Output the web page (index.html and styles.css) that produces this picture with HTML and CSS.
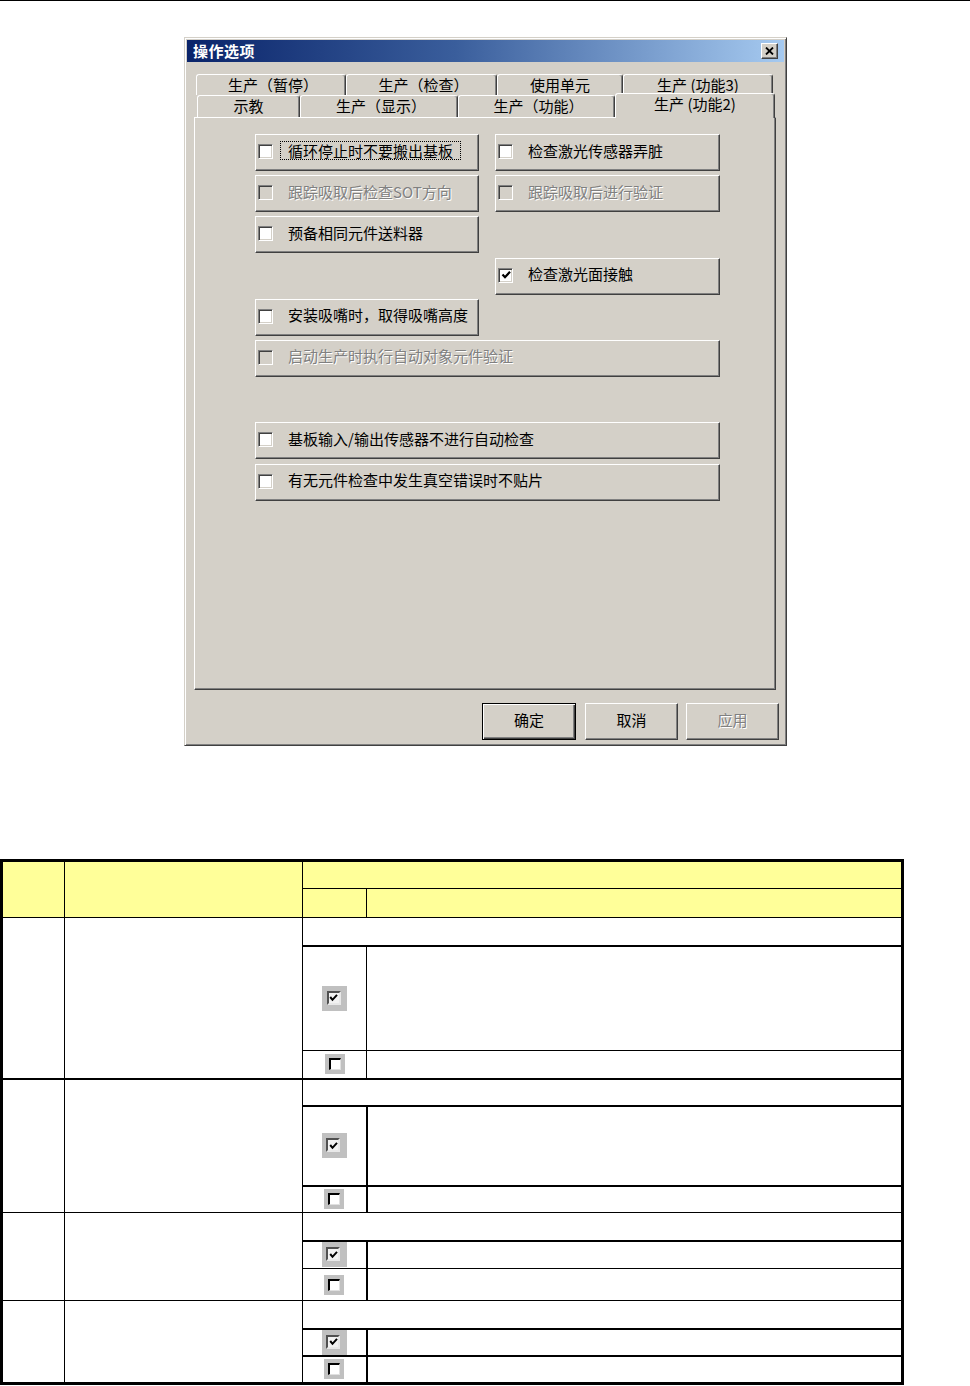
FILE: index.html
```html
<!DOCTYPE html>
<html lang="zh-CN">
<head>
<meta charset="utf-8">
<title>操作选项</title>
<link rel="stylesheet" href="styles.css">
</head>
<body>
<div class="top-rule"></div>

<div class="dialog">
  <div class="titlebar">
    <span class="title">操作选项</span>
    <span class="close"><svg width="9" height="8" viewBox="0 0 9 8"><path d="M1 0.5 L8 7.5 M8 0.5 L1 7.5" stroke="#000" stroke-width="1.8" fill="none"/></svg></span>
  </div>
  <div class="dlg-body">
    <div class="tabs">
      <div class="tab-row back">
        <div class="tab t-pause">生产（暂停）</div>
        <div class="tab t-check">生产（检查）</div>
        <div class="tab t-unit">使用单元</div>
        <div class="tab t-f3">生产 (功能3)</div>
      </div>
      <div class="tab-row front">
        <div class="tab t-teach">示教</div>
        <div class="tab t-disp">生产（显示）</div>
        <div class="tab t-func">生产（功能）</div>
        <div class="tab t-f2 sel">生产 (功能2)</div>
      </div>
    </div>
    <div class="panel">
      <div class="opts">
        <div class="opt a1"><span class="cb"></span><span class="focus">循环停止时不要搬出基板</span></div>
        <div class="opt b1"><span class="cb"></span><span>检查激光传感器弄脏</span></div>
        <div class="opt a2 dis"><span class="cb"></span><span>跟踪吸取后检查SOT方向</span></div>
        <div class="opt b2 dis"><span class="cb"></span><span>跟踪吸取后进行验证</span></div>
        <div class="opt a3"><span class="cb"></span><span>预备相同元件送料器</span></div>
        <div class="opt b4"><span class="cb"><svg class="tick" width="12" height="12" viewBox="0 0 12 12"><path d="M2.5 5.5 L5 8.2 L10 2.8" stroke="#000" stroke-width="2.2" fill="none"/></svg></span><span>检查激光面接触</span></div>
        <div class="opt a5"><span class="cb"></span><span>安装吸嘴时，取得吸嘴高度</span></div>
        <div class="opt w6 dis"><span class="cb"></span><span>启动生产时执行自动对象元件验证</span></div>
        <div class="opt w8"><span class="cb"></span><span>基板输入/输出传感器不进行自动检查</span></div>
        <div class="opt w9"><span class="cb"></span><span>有无元件检查中发生真空错误时不贴片</span></div>
      </div>
    </div>
    <div class="actions">
      <div class="btn default">确定</div>
      <div class="btn cancel">取消</div>
      <div class="btn dis">应用</div>
    </div>
  </div>
</div>

<table class="spec">
  <colgroup><col class="c1"><col class="c2"><col class="c3"><col class="c4"></colgroup>
  <thead>
    <tr class="h-28"><th rowspan="2"></th><th rowspan="2"></th><th colspan="2"></th></tr>
    <tr class="h-29"><th></th><th></th></tr>
  </thead>
  <tbody class="grp">
    <tr class="h-28"><td rowspan="3"></td><td rowspan="3"></td><td colspan="2"></td></tr>
    <tr class="h-105 thick"><td class="cbc"><span class="tcb on"><span class="in"><svg width="9" height="9" viewBox="0 0 9 9"><path d="M1.2 4 L3.5 6.8 L8 1.8" stroke="#000" stroke-width="2" fill="none"/></svg></span></span></td><td></td></tr>
    <tr class="h-28"><td class="cbc"><span class="tcb off"><span class="in"></span></span></td><td></td></tr>
  </tbody>
  <tbody class="grp bold-top bold-mid">
    <tr class="h-27"><td rowspan="3"></td><td rowspan="3"></td><td colspan="2"></td></tr>
    <tr class="h-80 thick"><td class="cbc"><span class="tcb on"><span class="in"><svg width="9" height="9" viewBox="0 0 9 9"><path d="M1.2 4 L3.5 6.8 L8 1.8" stroke="#000" stroke-width="2" fill="none"/></svg></span></span></td><td></td></tr>
    <tr class="h-27 thick"><td class="cbc"><span class="tcb off"><span class="in"></span></span></td><td></td></tr>
  </tbody>
  <tbody class="grp bold-mid">
    <tr class="h-28"><td rowspan="3"></td><td rowspan="3"></td><td colspan="2"></td></tr>
    <tr class="h-28 thick"><td class="cbc"><span class="tcb on"><span class="in"><svg width="9" height="9" viewBox="0 0 9 9"><path d="M1.2 4 L3.5 6.8 L8 1.8" stroke="#000" stroke-width="2" fill="none"/></svg></span></span></td><td></td></tr>
    <tr class="h-32"><td class="cbc"><span class="tcb off"><span class="in"></span></span></td><td></td></tr>
  </tbody>
  <tbody class="grp bold-mid">
    <tr class="h-28"><td rowspan="3"></td><td rowspan="3"></td><td colspan="2"></td></tr>
    <tr class="h-27 thick"><td class="cbc"><span class="tcb on"><span class="in"><svg width="9" height="9" viewBox="0 0 9 9"><path d="M1.2 4 L3.5 6.8 L8 1.8" stroke="#000" stroke-width="2" fill="none"/></svg></span></span></td><td></td></tr>
    <tr class="h-28 thick"><td class="cbc"><span class="tcb off"><span class="in"></span></span></td><td></td></tr>
  </tbody>
</table>
</body>
</html>
```

FILE: styles.css
```css
html, body {
  margin: 0;
  padding: 0;
  background: #fff;
}
body {
  font-family: "Noto Sans CJK SC", "Noto Sans", sans-serif;
  color: #000;
}
.top-rule {
  height: 0;
  border-top: 1px solid #000;
}

/* ---------- dialog ---------- */
.dialog {
  box-sizing: border-box;
  width: 603px;
  margin: 36px 0 0 184px;
  padding: 2px;
  background: #d4d0c8;
  border: 1px solid;
  border-color: #d4d0c8 #404040 #404040 #d4d0c8;
  box-shadow: inset 1px 1px #fff, inset -1px -1px #808080;
}
.titlebar {
  height: 22px;
  display: flex;
  align-items: center;
  justify-content: space-between;
  padding: 0 6px 0 6px;
  background: linear-gradient(90deg, #0a246a 0%, #3a5e9c 45%, #a6caf0 100%);
  color: #fff;
}
.title {
  font-size: 15px;
  font-weight: bold;
  line-height: 20px;
  letter-spacing: 0.5px;
}
.close {
  box-sizing: border-box;
  width: 17px;
  height: 16px;
  display: flex;
  align-items: center;
  justify-content: center;
  background: #d4d0c8;
  border: 1px solid;
  border-color: #fff #404040 #404040 #fff;
  box-shadow: inset -1px -1px #808080;
}
.dlg-body {
  padding: 12px 5px 3px 7px;
}

/* ---------- tabs ---------- */
.tab-row {
  display: flex;
  height: 21px;
}
.tab-row.back { padding-left: 2px; }
.tab-row.front { height: 22px; padding-left: 3px; }
.tab {
  box-sizing: border-box;
  height: 100%;
  flex: none;
  background: #d4d0c8;
  border: 1px solid;
  border-bottom: none;
  border-color: #fff #404040 transparent #fff;
  box-shadow: inset -1px 0 #808080;
  border-radius: 3px 3px 0 0;
  text-align: center;
  font-size: 15px;
  line-height: 19px;
  white-space: nowrap;
}
.t-pause { width: 150px; padding-left: 4px; }
.t-check { width: 151px; padding-left: 4px; }
.t-unit { width: 126px; }
.t-f3 { width: 150px; }
.t-teach { width: 103px; }
.t-disp { width: 158px; padding-left: 4px; }
.t-func { width: 157px; padding-left: 4px; }
.t-f2 { width: 160px; }
.tab.sel {
  position: relative;
  z-index: 1;
  height: 25px;
  margin-top: -2px;
  padding-top: 1px;
  line-height: 18px;
}

.panel {
  box-sizing: border-box;
  height: 573px;
  margin-right: 3px;
  padding: 16px 0 0 60px;
  border: 1px solid;
  border-color: #fff #404040 #404040 #fff;
  box-shadow: inset -1px -1px #808080;
}
.opts {
  display: grid;
  grid-template-columns: 224px 225px;
  grid-template-rows: repeat(9, 37px);
  column-gap: 16px;
  row-gap: 4.2px;
}
.opt {
  box-sizing: border-box;
  display: flex;
  align-items: center;
  padding: 0 0 4px 2px;
  border: 1px solid;
  border-color: #fff #404040 #404040 #fff;
  box-shadow: inset -1px -1px #808080;
  font-size: 15px;
  line-height: 20px;
  white-space: nowrap;
}
.a1 { grid-row: 1; grid-column: 1; }
.b1 { grid-row: 1; grid-column: 2; }
.a2 { grid-row: 2; grid-column: 1; }
.b2 { grid-row: 2; grid-column: 2; }
.a3 { grid-row: 3; grid-column: 1; }
.b4 { grid-row: 4; grid-column: 2; }
.a5 { grid-row: 5; grid-column: 1; }
.w6 { grid-row: 6; grid-column: 1 / 3; }
.w8 { grid-row: 8; grid-column: 1 / 3; }
.w9 { grid-row: 9; grid-column: 1 / 3; }

.cb {
  box-sizing: border-box;
  flex: none;
  width: 15px;
  height: 15px;
  margin-right: 15px;
  margin-top: 2px;
  background: #fff;
  border: 1px solid;
  border-color: #808080 #fff #fff #808080;
  box-shadow: inset 1px 1px #404040, inset -1px -1px #d4d0c8;
  display: flex;
  align-items: center;
  justify-content: center;
}
.cb .tick { display: block; }
.opt.dis {
  color: #808080;
  text-shadow: 1px 1px 0 #fff;
}
.opt.dis .cb { background: #d4d0c8; }
.focus {
  margin-left: -8px;
  padding: 0 7px;
  border: 1px dotted #000;
  line-height: 17px;
}

.actions {
  display: flex;
  justify-content: flex-end;
  margin-top: 13px;
}
.btn {
  box-sizing: border-box;
  width: 93px;
  height: 37px;
  border: 1px solid;
  border-color: #fff #404040 #404040 #fff;
  box-shadow: inset -1px -1px #808080;
  text-align: center;
  font-size: 15px;
  line-height: 32px;
}
.btn.default {
  width: 94px;
  margin-right: 9px;
  border-color: #000;
  box-shadow: inset 1px 1px #fff, inset -1px -1px #404040, inset -2px -2px #808080;
}
.btn.cancel { margin-right: 8px; }
.btn.dis {
  color: #808080;
  text-shadow: 1px 1px 0 #fff;
}

/* ---------- table ---------- */
.spec {
  margin-top: 113px;
  width: 904px;
  table-layout: fixed;
  border-collapse: collapse;
  border: 3px solid #000;
}
.c1 { width: 63px; }
.c2 { width: 238px; }
.c3 { width: 64px; }
.c4 { width: 536px; }
.spec th, .spec td {
  border: 1px solid #000;
  padding: 0;
  line-height: 0;
}
.spec thead th { background: #ffff99; }
.h-27 { height: 27px; }
.h-28 { height: 28px; }
.h-29 { height: 29px; }
.h-32 { height: 32px; }
.h-80 { height: 80px; }
.h-105 { height: 105px; }
.spec tr.thick td { border-top-width: 2px; }
.spec tbody.bold-top tr:first-child td { border-top-width: 2px; }
.spec tbody.bold-mid tr:not(:first-child) td + td { border-left-width: 2px; }
.cbc { text-align: center; vertical-align: middle; }

.tcb {
  display: flex;
  align-items: center;
  justify-content: center;
  margin: 0 auto;
  background: #c0c0c0;
}
.tcb.on { width: 25px; height: 25px; }
.tcb.off { width: 20px; height: 20px; }
.tcb .in {
  box-sizing: border-box;
  display: flex;
  align-items: center;
  justify-content: center;
}
.tcb.on .in {
  width: 14px;
  height: 14px;
  margin: -1px 1px 0 -1px;
  background: #f2f2f2;
  border: 2px solid;
  border-color: #505050 #e8e8e8 #e8e8e8 #505050;
}
.tcb.off .in {
  width: 12px;
  height: 12px;
  background: #fff;
  border: 2px solid;
  border-color: #000 #e0e0e0 #e0e0e0 #000;
  border-right-width: 1px;
  border-bottom-width: 1px;
}
```
